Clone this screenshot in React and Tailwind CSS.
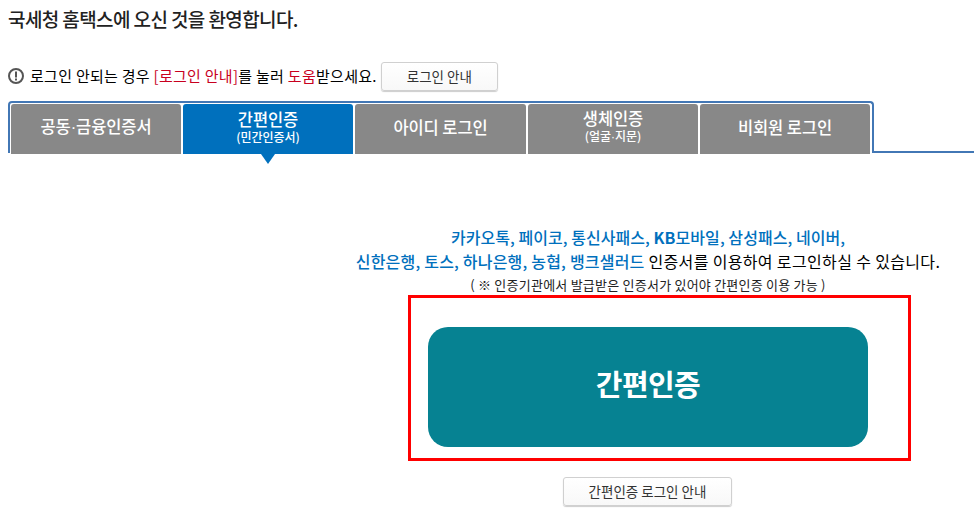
const font = { fontFamily: '"Noto Sans CJK KR", sans-serif' };

function Dot() {
  return <span className="font-['Liberation_Sans']">·</span>;
}

function Tab({ label, sub, active, w }) {
  return (
    <div className={`${w} shrink-0 h-[50px] mr-[2px] pb-[5px] rounded-t-[3px] flex flex-col items-center justify-center text-white font-medium relative ${active ? "bg-[#0070bd]" : "bg-[#888888]"}`}>
      <div className="text-[16.5px] leading-[20px] tracking-[-0.1px] whitespace-nowrap">{label}</div>
      {sub && <div className="text-[12px] leading-[16px] tracking-[0px] whitespace-nowrap">{sub}</div>}
      {active && <div className="absolute left-[78px] top-[50px] w-0 h-0 border-l-[7px] border-r-[7px] border-t-[10px] border-l-transparent border-r-transparent border-t-[#0070bd]" />}
    </div>
  );
}

function GhostButton({ children, className }) {
  return (
    <div className={`flex items-center justify-center bg-gradient-to-b from-white to-[#f8f8f8] border border-[#d0d0d0] rounded-[3px] shadow-[0_1px_1px_rgba(0,0,0,0.2)] text-[13.5px] text-[#333] ${className}`}>
      {children}
    </div>
  );
}

export default function App() {
  return (
    <div className="w-[974px] h-[508px] overflow-hidden bg-white" style={font}>
      <h1 className="pl-[8px] pt-[7px] h-[61px] text-[19px] leading-[24px] font-medium text-[#222] tracking-[-0.6px] whitespace-nowrap">
        국세청 홈택스에 오신 것을 환영합니다.
      </h1>
      <div className="flex items-center pl-[8px] h-[30px] text-[15px] text-black">
        <svg width="16" height="16" viewBox="0 0 16 16" className="mr-[6px] shrink-0">
          <circle cx="8" cy="8" r="7" fill="none" stroke="#555" strokeWidth="2" />
          <rect x="7" y="3.5" width="2" height="6" fill="#555" />
          <rect x="7" y="10.5" width="2" height="2" fill="#555" />
        </svg>
        <span className="tracking-[0.28px] whitespace-nowrap">
          로그인 안되는 경우 <span className="text-[#c8001e]">[로그인 안내]</span>를 눌러 <span className="text-[#c8001e]">도움</span>받으세요.
        </span>
        <GhostButton className="ml-[4px] w-[117px] h-[29px]">로그인 안내</GhostButton>
      </div>
      <div className="flex mt-[10px] h-[52px]">
        <div className="ml-[8px] flex pl-[1px] pt-[1px] w-[866px] h-[52px] border-[#4277b5] border-l-2 border-t-2 border-r-2 rounded-t-[4px]">
          <Tab w="w-[170px]" label={<>공동<Dot />금융인증서</>} />
          <Tab w="w-[170px]" label="간편인증" sub="(민간인증서)" active />
          <Tab w="w-[171px]" label="아이디 로그인" />
          <Tab w="w-[170px]" label="생체인증" sub={<>(얼굴<Dot />지문)</>} />
          <Tab w="w-[170px]" label="비회원 로그인" />
        </div>
        <div className="flex-1 self-end h-[2px] bg-[#4277b5]" />
      </div>
      <div className="flex flex-col items-center ml-[322px] w-[652px]">
        <p className="mt-[72px] text-[16px] leading-[24px] font-medium text-[#0070bd] tracking-[0.05px] whitespace-nowrap">
          카카오톡, 페이코, 통신사패스, <b className="font-bold">KB</b>모바일, 삼성패스, 네이버,
        </p>
        <p className="text-[16px] leading-[24px] text-black tracking-[0.35px] whitespace-nowrap">
          <span className="font-medium text-[#0070bd] tracking-[0.2px]">신한은행, 토스, 하나은행, 농협, 뱅크샐러드</span> 인증서를 이용하여 로그인하실 수 있습니다.
        </p>
        <p className="mt-[2px] text-[13px] leading-[20px] text-[#222] whitespace-nowrap tracking-[0.23px]">( ※ 인증기관에서 발급받은 인증서가 있어야 간편인증 이용 가능 )</p>
        <div className="self-start ml-[86px] w-[503px] h-[166px] border-[3px] border-[#ff0000] pl-[17px] pt-[29px]">
          <div className="w-[440px] h-[120px] pb-[6px] rounded-[20px] bg-[#068292] flex items-center justify-center text-white text-[29px] font-bold tracking-[-0.6px]">
            간편인증
          </div>
        </div>
        <GhostButton className="self-start ml-[241px] mt-[16px] w-[169px] h-[29px]">간편인증 로그인 안내</GhostButton>
      </div>
    </div>
  );
}
